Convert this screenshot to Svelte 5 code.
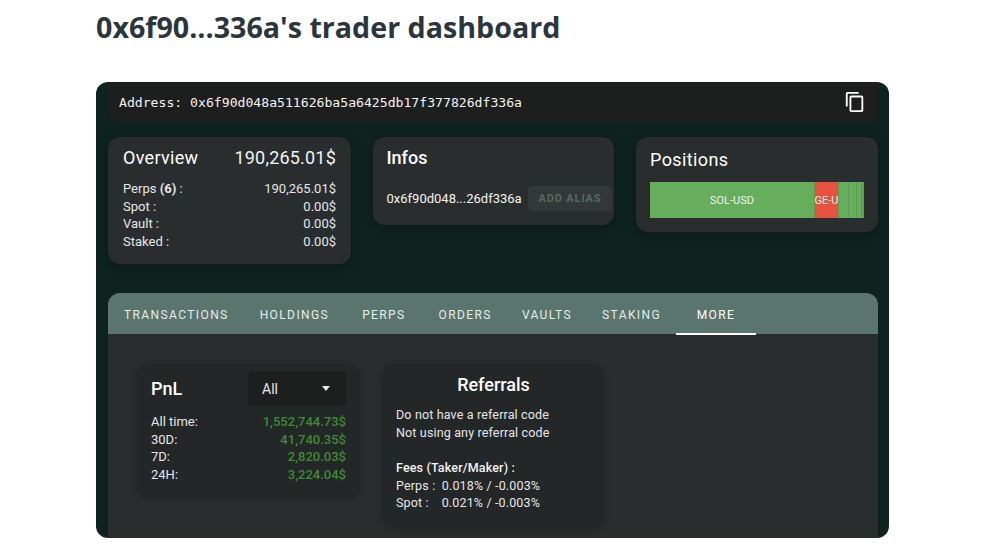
<script>
  const balances = [
    { label: 'Spot :', value: '0.00$' },
    { label: 'Vault :', value: '0.00$' },
    { label: 'Staked :', value: '0.00$' }
  ];
  const tabs = ['TRANSACTIONS', 'HOLDINGS', 'PERPS', 'ORDERS', 'VAULTS', 'STAKING', 'MORE'];
  const pnl = [
    { label: 'All time:', value: '1,552,744.73$' },
    { label: '30D:', value: '41,740.35$' },
    { label: '7D:', value: '2,820.03$' },
    { label: '24H:', value: '3,224.04$' }
  ];
  const positions = [
    { name: 'SOL-USD', width: 165, color: '#66ad5c' },
    { name: 'GE-U', width: 24, color: '#e5533f' },
    { name: '', width: 10, color: '#66ad5c' },
    { name: '', width: 8, color: '#66ad5c' },
    { name: '', width: 5, color: '#66ad5c' },
    { name: '', width: 2, color: '#66ad5c' }
  ];
</script>

<main class="page">
  <h1>0x6f90...336a's trader dashboard</h1>

  <section class="panel">
    <div class="address">
      <span>Address: 0x6f90d048a511626ba5a6425db17f377826df336a</span>
      <svg width="22" height="22" viewBox="0 0 24 24" fill="#fff">
        <path d="M16 1H4c-1.1 0-2 .9-2 2v14h2V3h12V1zm3 4H8c-1.1 0-2 .9-2 2v14c0 1.100.9 2 2 2h11c1.100 0 2-.9 2-2V7c0-1.100-.9-2-2-2zm0 16H8V7h11v14z" />
      </svg>
    </div>

    <div class="cards">
      <div class="card overview">
        <div class="head">
          <h2>Overview</h2>
          <span class="total">190,265.01$</span>
        </div>
        <div class="row"><span>Perps <b>(6)</b> :</span><span>190,265.01$</span></div>
        {#each balances as b}
          <div class="row"><span>{b.label}</span><span>{b.value}</span></div>
        {/each}
      </div>

      <div class="card infos">
        <h2>Infos</h2>
        <div class="alias">
          <span>0x6f90d048...26df336a</span>
          <button disabled>ADD ALIAS</button>
        </div>
      </div>

      <div class="card positions">
        <h2>Positions</h2>
        <div class="bar">
          {#each positions as p}
            <div class="slice" style="width: {p.width}px; background: {p.color}">{p.name}</div>
          {/each}
        </div>
      </div>
    </div>

    <div class="tabbox">
      <nav class="tabs">
        {#each tabs as t}
          <div class="tab" class:active={t === 'MORE'}>{t}</div>
        {/each}
      </nav>

      <div class="tabcontent">
        <div class="inner pnl">
          <div class="pnlhead">
            <h2>PnL</h2>
            <div class="select">
              <span>All</span>
              <i class="caret"></i>
            </div>
          </div>
          {#each pnl as p}
            <div class="row"><span>{p.label}</span><span class="green">{p.value}</span></div>
          {/each}
        </div>

        <div class="inner referrals">
          <h2>Referrals</h2>
          <p>Do not have a referral code</p>
          <p>Not using any referral code</p>
          <p class="fees"><b>Fees (Taker/Maker) :</b></p>
          <p>Perps :&nbsp; 0.018% / -0.003%</p>
          <p>Spot :&nbsp;&nbsp;&nbsp; 0.021% / -0.003%</p>
        </div>
      </div>
    </div>
  </section>
</main>

<style>
  :global(body) {
    background: #fff;
  }

  .page {
    width: 793px;
    margin-left: 96px;
    font-family: Roboto, sans-serif;
  }

  h1 {
    margin: 0;
    height: 82px;
    padding-top: 7px;
    box-sizing: border-box;
    font-family: "Open Sans", sans-serif;
    font-size: 28.65px;
    line-height: 40px;
    font-weight: 700;
    color: #2a353c;
  }

  .panel {
    height: 456px;
    box-sizing: border-box;
    padding: 0 11px 0 12px;
    background: #0e2220;
    border-radius: 12px;
    overflow: hidden;
  }

  .address {
    height: 40px;
    display: flex;
    align-items: center;
    justify-content: space-between;
    padding: 0 12px 0 11px;
    background: #1d1e1e;
    border-radius: 0 0 8px 8px;
    font-family: "DejaVu Sans Mono", monospace;
    font-size: 13.13px;
    color: #f2f2f2;
  }

  .cards {
    display: flex;
    align-items: flex-start;
    justify-content: space-between;
    margin-top: 15px;
  }

  .card {
    width: 242px;
    box-sizing: border-box;
    background: #292d2e;
    border-radius: 12px;
    color: #f2f2f2;
    box-shadow: 0 2px 8px rgba(0, 0, 0, 0.25);
  }

  h2 {
    margin: 0;
    font-size: 18px;
    font-weight: 500;
    color: #fff;
  }

  .row {
    display: flex;
    justify-content: space-between;
    font-size: 13px;
    line-height: 17.7px;
    color: #e6e6e6;
  }

  .overview {
    width: 243px;
    height: 127px;
    padding: 9px 15px 0 15px;
  }

  .head {
    display: flex;
    justify-content: space-between;
    align-items: center;
    height: 23px;
    margin-bottom: 11px;
  }

  .head h2 {
    font-weight: 400;
    letter-spacing: 0.3px;
  }

  .total {
    font-size: 18px;
    letter-spacing: 0.2px;
  }

  .infos {
    width: 241px;
    height: 88px;
    padding: 9px 2px 0 13.5px;
  }

  .infos h2 {
    font-weight: 500;
    line-height: 23px;
  }

  .alias {
    display: flex;
    align-items: center;
    justify-content: space-between;
    margin-top: 17px;
    font-size: 13px;
  }

  button {
    width: 84px;
    height: 25px;
    padding: 0;
    border: 0;
    border-radius: 4px;
    background: #323837;
    color: #56685f;
    font-family: Roboto, sans-serif;
    font-size: 11px;
    font-weight: 700;
    letter-spacing: 0.85px;
  }

  .positions {
    height: 95px;
    padding: 11px 14px 0 14px;
  }

  .positions h2 {
    font-weight: 400;
    letter-spacing: 0.4px;
    line-height: 23px;
  }

  .bar {
    display: flex;
    height: 36px;
    margin-top: 11px;
  }

  .slice {
    box-sizing: border-box;
    border-right: 1px solid #5a9a52;
    display: flex;
    align-items: center;
    justify-content: center;
    overflow: hidden;
    white-space: nowrap;
    font-size: 11px;
    color: #f0f0f0;
  }

  .tabbox {
    margin-top: 29px;
    height: 245px;
    background: #292d2e;
    border-radius: 12px 12px 0 0;
  }

  .tabs {
    display: flex;
    height: 41px;
    background: #5a756e;
    border-radius: 12px 12px 0 0;
  }

  .tab {
    box-sizing: border-box;
    height: 42px;
    padding: 15px 15px 0 15px;
    font-size: 12px;
    font-weight: 400;
    letter-spacing: 1.4px;
    color: #e6ecea;
  }

  .tab:nth-child(1) { padding-left: 16px; padding-right: 16px; }
  .tab:nth-child(2) { padding-right: 18px; }
  .tab:nth-child(3) { padding-right: 17px; }
  .tab:nth-child(4) { padding-left: 16px; }
  .tab:nth-child(7) { width: 80px; text-align: center; padding: 15px 0 0; }

  .tab.active {
    color: #fff;
    border-bottom: 2px solid #fff;
  }

  .tabcontent {
    display: flex;
    align-items: flex-start;
    gap: 23px;
    padding: 30px 0 0 29px;
  }

  .inner {
    box-sizing: border-box;
    background: #232728;
    border-radius: 12px;
    box-shadow: 0 1px 6px rgba(0, 0, 0, 0.18);
    color: #f2f2f2;
  }

  .pnl {
    width: 223px;
    height: 134px;
    padding: 7px 14px 0 14px;
  }

  .pnlhead {
    display: flex;
    justify-content: space-between;
    align-items: center;
    margin-bottom: 7px;
  }

  .select {
    width: 98px;
    height: 35px;
    box-sizing: border-box;
    padding: 0 16px 0 14px;
    display: flex;
    align-items: center;
    justify-content: space-between;
    background: #1d1e1e;
    border-radius: 4px;
    font-size: 14px;
    color: #e8e8e8;
  }

  .caret {
    width: 0;
    height: 0;
    border-left: 4.5px solid transparent;
    border-right: 4.5px solid transparent;
    border-top: 5px solid #e8e8e8;
  }

  .green {
    color: #3f8a35;
    font-weight: 500;
  }

  .referrals {
    width: 221px;
    height: 164px;
    padding: 9px 13px 0 13px;
  }

  .referrals h2 {
    text-align: center;
    line-height: 23px;
    margin-bottom: 10px;
  }

  p {
    margin: 0;
    font-size: 12.5px;
    line-height: 17.7px;
    letter-spacing: 0.15px;
    color: #e6e6e6;
  }

  .fees {
    margin-top: 17.5px;
  }

  .fees b {
    font-weight: 500;
    color: #f2f2f2;
  }
</style>
